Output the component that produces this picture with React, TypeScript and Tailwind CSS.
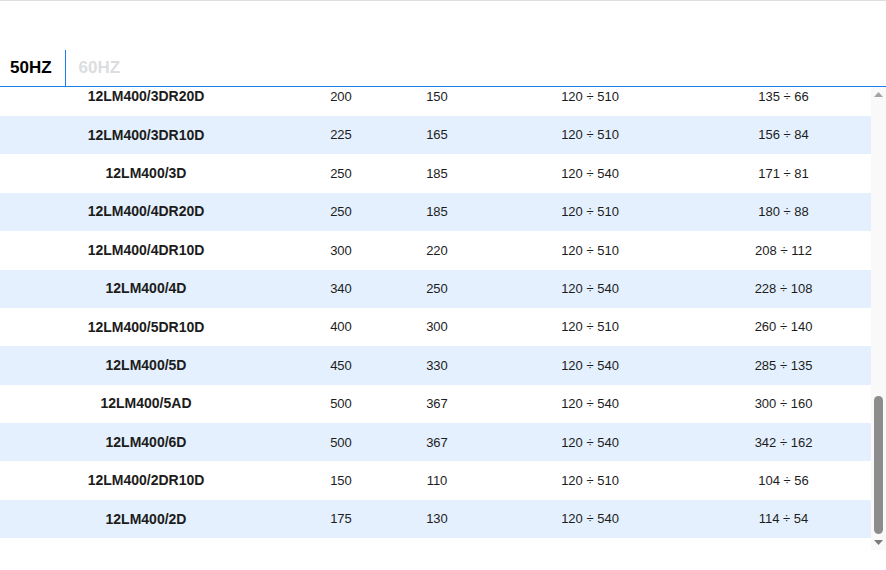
import { useEffect, useRef, useState } from 'react';

type Row = [string, string, string, string, string];

// rows above the fold (scrolled out of view)
const earlier: Row[] = [
  ['12LM100/1D', '10', '7', '30 ÷ 150', '14 ÷ 6'],
  ['12LM100/1.5D', '15', '11', '30 ÷ 150', '18 ÷ 8'],
  ['12LM100/2D', '20', '15', '30 ÷ 150', '24 ÷ 11'],
  ['12LM100/3D', '30', '22', '30 ÷ 150', '32 ÷ 15'],
  ['12LM150/2D', '30', '22', '50 ÷ 210', '29 ÷ 13'],
  ['12LM150/3D', '40', '30', '50 ÷ 210', '41 ÷ 19'],
  ['12LM150/4D', '50', '37', '50 ÷ 210', '52 ÷ 25'],
  ['12LM150/5D', '60', '45', '50 ÷ 210', '63 ÷ 30'],
  ['12LM200/2D', '50', '37', '60 ÷ 270', '43 ÷ 21'],
  ['12LM200/3D', '75', '55', '60 ÷ 270', '62 ÷ 30'],
  ['12LM200/4D', '100', '75', '60 ÷ 270', '83 ÷ 40'],
  ['12LM200/5D', '125', '92', '60 ÷ 270', '104 ÷ 50'],
  ['12LM250/2D', '60', '45', '80 ÷ 330', '48 ÷ 24'],
  ['12LM250/3D', '90', '66', '80 ÷ 330', '71 ÷ 35'],
  ['12LM250/4D', '125', '92', '80 ÷ 330', '95 ÷ 47'],
  ['12LM250/5D', '150', '110', '80 ÷ 330', '119 ÷ 58'],
  ['12LM300/2D', '90', '66', '90 ÷ 390', '66 ÷ 32'],
  ['12LM300/3D', '125', '92', '90 ÷ 390', '98 ÷ 47'],
  ['12LM300/4D', '175', '130', '90 ÷ 390', '131 ÷ 63'],
  ['12LM300/5D', '200', '150', '90 ÷ 390', '164 ÷ 79'],
  ['12LM300/6D', '250', '185', '90 ÷ 390', '197 ÷ 95'],
  ['12LM350/2D', '125', '92', '100 ÷ 450', '84 ÷ 40'],
  ['12LM350/3D', '175', '130', '100 ÷ 450', '126 ÷ 60'],
  ['12LM350/4D', '250', '185', '100 ÷ 450', '168 ÷ 80'],
  ['12LM350/5D', '300', '220', '100 ÷ 450', '210 ÷ 100'],
  ['12LM400/1D', '90', '66', '120 ÷ 540', '57 ÷ 27'],
  ['12LM400/2DR20D', '125', '92', '120 ÷ 510', '89 ÷ 45'],
];

const visible: Row[] = [
  ['12LM400/3DR20D', '200', '150', '120 ÷ 510', '135 ÷ 66'],
  ['12LM400/3DR10D', '225', '165', '120 ÷ 510', '156 ÷ 84'],
  ['12LM400/3D', '250', '185', '120 ÷ 540', '171 ÷ 81'],
  ['12LM400/4DR20D', '250', '185', '120 ÷ 510', '180 ÷ 88'],
  ['12LM400/4DR10D', '300', '220', '120 ÷ 510', '208 ÷ 112'],
  ['12LM400/4D', '340', '250', '120 ÷ 540', '228 ÷ 108'],
  ['12LM400/5DR10D', '400', '300', '120 ÷ 510', '260 ÷ 140'],
  ['12LM400/5D', '450', '330', '120 ÷ 540', '285 ÷ 135'],
  ['12LM400/5AD', '500', '367', '120 ÷ 540', '300 ÷ 160'],
  ['12LM400/6D', '500', '367', '120 ÷ 540', '342 ÷ 162'],
  ['12LM400/2DR10D', '150', '110', '120 ÷ 510', '104 ÷ 56'],
  ['12LM400/2D', '175', '130', '120 ÷ 540', '114 ÷ 54'],
];

const rows = [...earlier, ...visible];

export default function App() {
  const [tab, setTab] = useState<'50' | '60'>('50');
  const scroller = useRef<HTMLDivElement>(null);

  useEffect(() => {
    if (scroller.current) scroller.current.scrollTop = scroller.current.scrollHeight;
  }, []);

  return (
    <div className="w-[886px] h-[570px] bg-white font-['Liberation_Sans',Arial,sans-serif] text-[#1c1c1c]">
      <div className="h-px bg-[#dedede]" />
      <div className="h-[49px]" />
      <div className="flex h-[36px]">
        <button
          onClick={() => setTab('50')}
          className={`pl-[10px] pr-[13px] text-[17px] font-bold ${tab === '50' ? 'text-black' : 'text-[#dcdde0]'}`}
        >
          50HZ
        </button>
        <div className="w-px bg-[#1a7ff0]" />
        <button
          onClick={() => setTab('60')}
          className={`pl-[13px] pr-[10px] text-[17px] font-bold ${tab === '60' ? 'text-black' : 'text-[#dcdde0]'}`}
        >
          60HZ
        </button>
      </div>
      <div className="h-px bg-[#1a7ff0]" />
      <div className="flex h-[463px]">
        <div ref={scroller} className="flex-1 overflow-y-scroll [scrollbar-width:none]">
          <div className="pb-[12px]">
            {rows.map((r, i) => (
              <div
                key={r[0]}
                className={`flex items-center h-[38.4px] text-[13px] ${(rows.length - i) % 2 === 0 ? 'bg-white' : 'bg-[#e4f0fd]'}`}
              >
                <div className="w-[292px] text-center font-bold text-[14px]">{r[0]}</div>
                <div className="w-[98px] text-center">{r[1]}</div>
                <div className="w-[94px] text-center">{r[2]}</div>
                <div className="w-[212px] text-center">{r[3]}</div>
                <div className="flex-1 text-center">{r[4]}</div>
              </div>
            ))}
          </div>
        </div>
        {/* scrollbar */}
        <div className="w-[15px] bg-[#f9f9f9] flex flex-col items-center">
          <svg width="15" height="14" viewBox="0 0 15 14" className="shrink-0">
            <path d="M3 10 L7.5 5 L12 10 Z" fill="#a3a3a3" />
          </svg>
          <div className="flex-1 w-full flex flex-col justify-end px-[3px] pb-[2px]">
            <div className="h-[138px] rounded-full bg-[#8c8c8c]" />
          </div>
          <svg width="15" height="14" viewBox="0 0 15 14" className="shrink-0">
            <path d="M3 4 L12 4 L7.5 9 Z" fill="#7a7a7a" />
          </svg>
        </div>
      </div>
    </div>
  );
}
